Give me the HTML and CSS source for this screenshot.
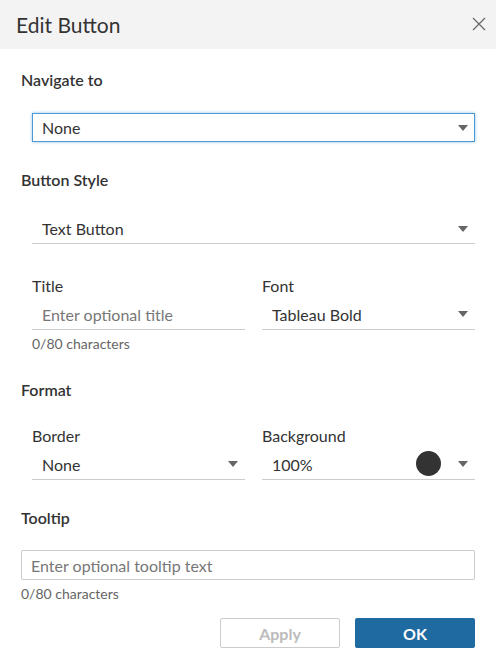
FILE: index.html
```html
<!DOCTYPE html>
<html>
<head>
<meta charset="utf-8">
<link rel="stylesheet" href="styles.css">
</head>
<body>
<div class="dialog">
  <div class="header">
    <span class="title">Edit Button</span>
    <svg class="close" width="14" height="14" viewBox="0 0 14 14"><path d="M1 1L13 13M13 1L1 13" stroke="#666" stroke-width="1.2" fill="none"/></svg>
  </div>
  <div class="body">
    <div class="heading h-nav">Navigate to</div>
    <div class="indent">
      <div class="select focused"><span>None</span><span class="arrow"></span></div>
    </div>

    <div class="heading h-style">Button Style</div>
    <div class="indent">
      <div class="select line style-select"><span>Text Button</span><span class="arrow"></span></div>
    </div>

    <div class="indent grid2 g-title">
      <div class="field">
        <div class="label">Title</div>
        <div class="select line tall"><span class="placeholder">Enter optional title</span></div>
        <div class="counter">0/80 characters</div>
      </div>
      <div class="field">
        <div class="label">Font</div>
        <div class="select line tall"><span>Tableau Bold</span><span class="arrow"></span></div>
      </div>
    </div>

    <div class="heading h-format">Format</div>
    <div class="indent grid2 g-format">
      <div class="field">
        <div class="label">Border</div>
        <div class="select line tall"><span>None</span><span class="arrow"></span></div>
      </div>
      <div class="field">
        <div class="label">Background</div>
        <div class="select line tall"><span>100%</span><span class="swatch-wrap"><span class="swatch"></span><span class="arrow"></span></span></div>
      </div>
    </div>

    <div class="heading h-tooltip">Tooltip</div>
    <div class="textbox"><span class="placeholder">Enter optional tooltip text</span></div>
    <div class="counter c-tooltip">0/80 characters</div>

    <div class="buttons">
      <div class="btn apply">Apply</div>
      <div class="btn ok">OK</div>
    </div>
  </div>
</div>
</body>
</html>
```
FILE: styles.css
```css
html, body {
  margin: 0;
  padding: 0;
  background: #fff;
}
body {
  font-family: Lato, "Liberation Sans", sans-serif;
  color: #333;
  width: 496px;
  height: 669px;
}
.dialog {
  width: 496px;
}
.header {
  height: 49px;
  background: #f3f3f3;
  display: flex;
  align-items: center;
  justify-content: space-between;
  padding: 0 10px 0 16px;
}
.title {
  font-size: 21px;
  color: #333;
  margin-top: -1px;
}
.close {
  display: block;
  margin-top: -1px;
}
.body {
  padding: 0 21px;
}
.heading {
  font-size: 16px;
  font-weight: 600;
  line-height: 20px;
  color: #333;
}
.h-nav { margin-top: 21px; }
.h-style { margin-top: 28px; }
.h-format { margin-top: 27px; }
.h-tooltip { margin-top: 28px; }
.indent {
  padding-left: 11px;
}
.select {
  box-sizing: border-box;
  display: flex;
  align-items: center;
  justify-content: space-between;
  padding: 0 7px 0 10px;
  font-size: 16px;
  color: #333;
}
.focused {
  margin-top: 23px;
  height: 29px;
  border: 1px solid #4c99d6;
  box-shadow: 0 0 3px rgba(76, 153, 214, 0.6);
  padding-left: 9px;
  padding-right: 6px;
}
.line {
  border-bottom: 1px solid #ccc;
}
.style-select {
  margin-top: 24px;
  height: 30px;
}
.tall {
  height: 34px;
  padding-top: 3px;
}
.arrow {
  width: 0;
  height: 0;
  border-left: 5px solid transparent;
  border-right: 5px solid transparent;
  border-top: 6px solid #666;
}
.placeholder {
  color: #777;
}
.grid2 {
  display: grid;
  grid-template-columns: 1fr 1fr;
  column-gap: 17px;
}
.g-title { margin-top: 32px; }
.g-format { margin-top: 26px; }
.label {
  font-size: 16px;
  line-height: 20px;
  color: #333;
}
.counter {
  font-size: 14px;
  line-height: 18px;
  color: #666;
  margin-top: 5px;
}
.swatch-wrap {
  display: flex;
  align-items: center;
  gap: 17px;
}
.swatch {
  width: 25px;
  height: 25px;
  border-radius: 50%;
  background: #333;
  margin-top: -2px;
}
.textbox {
  margin-top: 22px;
  height: 30px;
  box-sizing: border-box;
  border: 1px solid #ccc;
  border-radius: 2px;
  display: flex;
  align-items: center;
  padding-left: 9px;
  font-size: 16px;
}
.c-tooltip {
  margin-top: 5px;
}
.buttons {
  display: flex;
  justify-content: flex-end;
  gap: 15px;
  margin-top: 15px;
}
.btn {
  width: 120px;
  height: 30px;
  box-sizing: border-box;
  border-radius: 2px;
  display: flex;
  align-items: center;
  justify-content: center;
  font-size: 16px;
  font-weight: 700;
}
.apply {
  border: 1px solid #ccc;
  color: #bbb;
  background: #fff;
}
.ok {
  background: #1f6aa0;
  color: #fff;
}
```
